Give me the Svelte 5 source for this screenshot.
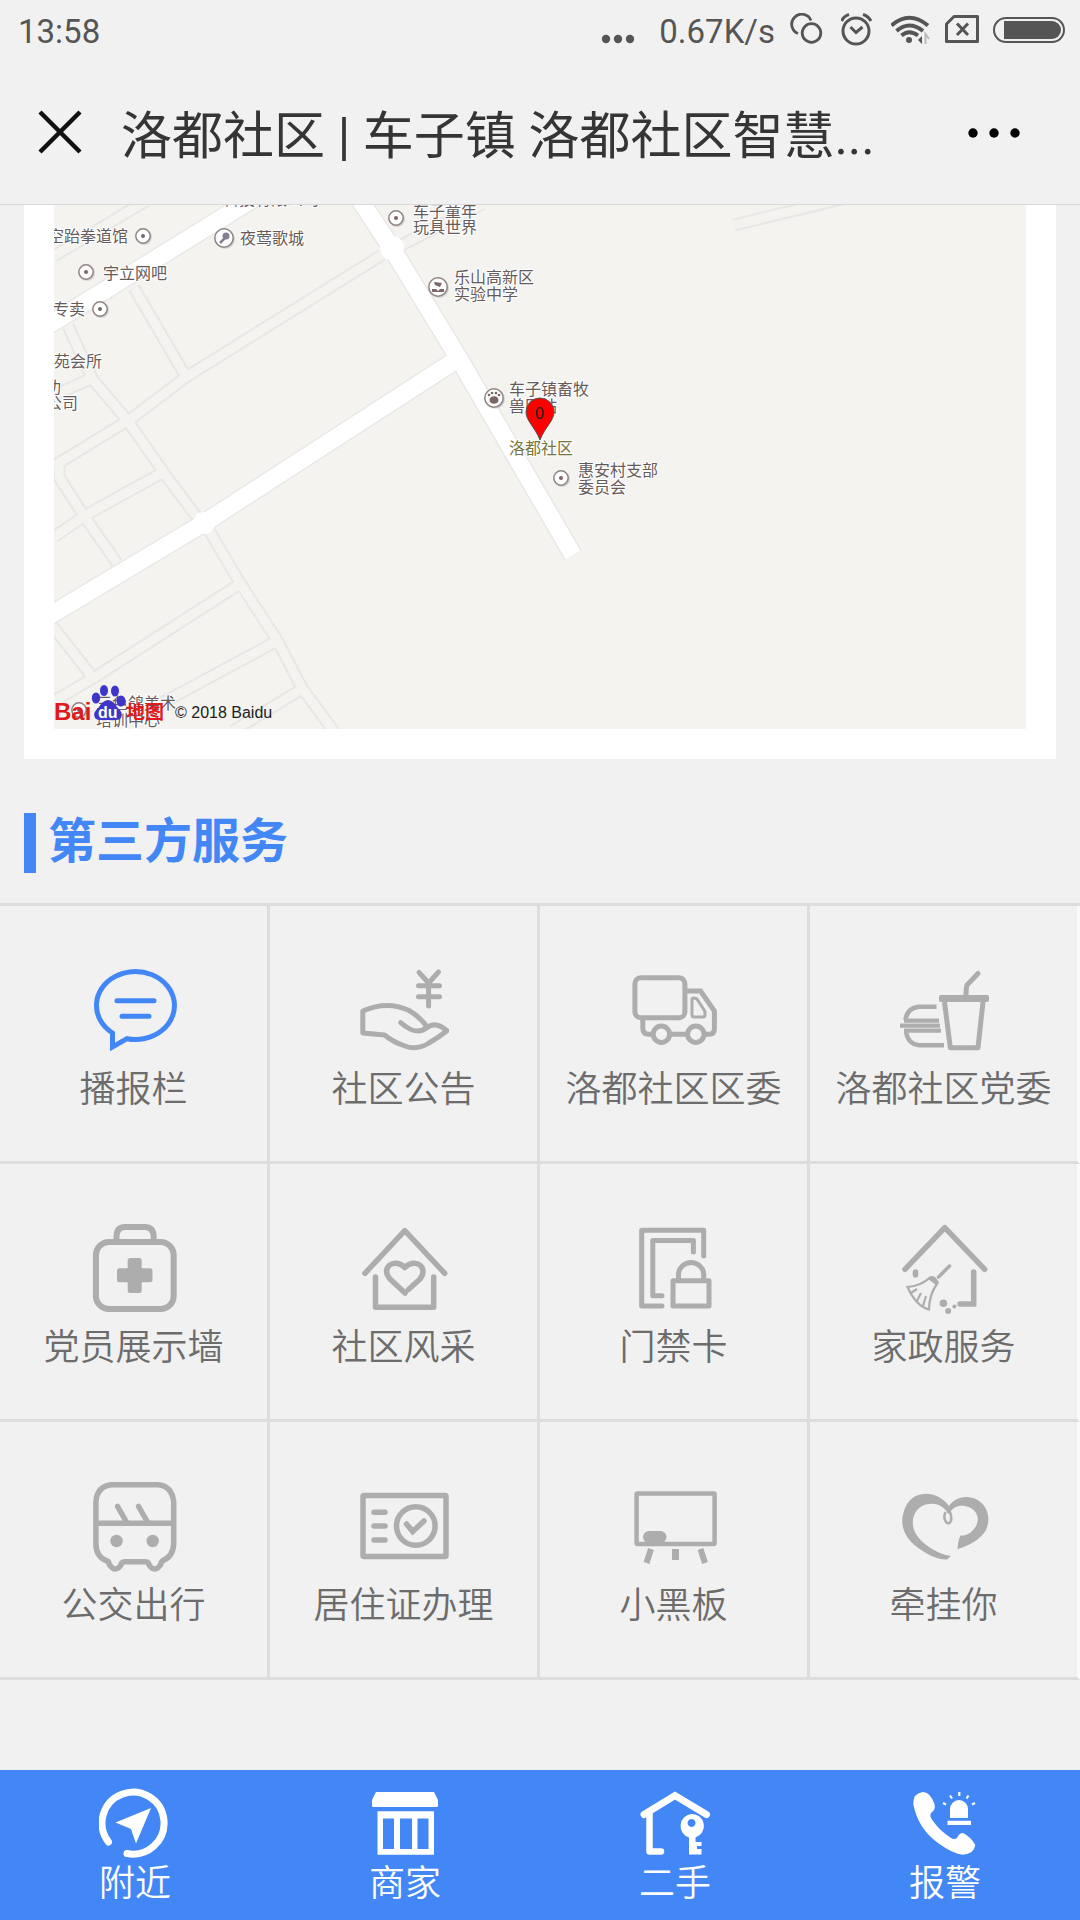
<script>
  let active = 0;

  let services = [
    {
      title: "播报栏",
      icon: `<path d="M23.5 67V81L38 72.7A39 34 0 1 0 23.5 67Z" /><path d="M28 34.7H65M33 50.3H60" stroke-linecap="round" />`,
    },
    {
      title: "社区公告",
      icon: `<g stroke-linecap="round" stroke-linejoin="round"><path d="M60 6.3L69.6 17L79.5 6M69.6 17V40M59.5 19.7H80.5M59.5 30.7H80.5" /><path d="M3.8 45C20 38 36 38 50 44.5C59 49.5 63 54 68.5 61.3C74 57 80 58 88 64.7C80 71 76 73.5 70 77C62 82 54 83 46 80C37 77 31 73.5 25.5 69L3.8 67Z" /><path d="M41.7 56.7C50 64 59 69 68.5 61" /></g>`,
    },
    {
      title: "洛都社区区委",
      icon: `<rect x="5.9" y="11.7" width="50" height="40" rx="6" /><path d="M57 25H71.6L85.4 45V63Q85.4 68.3 80 68.3H76M13.8 53V62Q13.8 68.3 20 68.3H23M42 68.3H57" /><circle cx="32.4" cy="68.3" r="8.2" /><circle cx="66.8" cy="68.3" r="8.2" /><path d="M63 33Q63 32 65 32Q67.5 32 69 34.5L76 45.5V49Q76 51 74 51H65Q63 51 63 49Z" stroke-width="3" />`,
    },
    {
      title: "洛都社区党委",
      icon: `<path d="M79 7.5L68 19Q67 22 67 30" stroke-linecap="round" /><rect x="40" y="29" width="50" height="7" rx="2" fill="#adadad" stroke="none" /><path d="M45.5 36L51.3 81.7H79L84 36" stroke-linejoin="round" /><path d="M37.5 40.7H20Q8 42 6.5 54M7 66Q9 78 20 79.3H45" stroke-width="4.5" /><path d="M5 54.7H40M1 59.7H41M5 64.7H42" stroke-width="4.3" />`,
    },
    {
      title: "党员展示墙",
      icon: `<g stroke-width="6"><path d="M27.5 17V12Q28 3 36 3H56Q64 3 64.7 12V17" /><rect x="6.9" y="18" width="77.8" height="67" rx="13" /></g><g fill="#adadad" stroke="none"><rect x="28" y="44.3" width="35.5" height="14" rx="2.5" /><rect x="38.7" y="34" width="14" height="35" rx="2.5" /></g>`,
    },
    {
      title: "社区风采",
      icon: `<g stroke-width="5.5" stroke-linecap="round" stroke-linejoin="round"><path d="M5.9 49.3L45.8 6.7L85.7 49.3" /><path d="M16.5 53V83.3H74.7V53" /><path d="M46 69L31 55C21 44 35 33 45.8 43.5C57 33 70 44 61 55L49.5 65.5" /></g>`,
    },
    {
      title: "门禁卡",
      icon: `<g stroke-linecap="round" stroke-linejoin="round"><path d="M74.7 32V6.3H12.7V82H33" /><path d="M64.4 28V16.5H23.8V71.7H33" /><rect x="44" y="56.7" width="36" height="25.3" /><path d="M49.5 55V49.5A12.7 12.7 0 0 1 74.7 49.5V55" /></g>`,
    },
    {
      title: "家政服务",
      icon: `<g stroke-width="5.5"><path d="M5.9 45.3L45.8 3.7L85.7 45.3" stroke-linecap="round" stroke-linejoin="round" /><path d="M74.7 48V80H61M16.5 48V51" stroke-linecap="round" /></g><path d="M50.5 42L39.5 53" stroke-width="3.5" stroke-linecap="round" /><path d="M31 53.5Q36 52 38.5 59Q30 71 30 85.5Q17 82 8.5 63Q22 62 31 53.5ZM12 69L18 65M18 77L22 69M24 82L27 72" stroke-width="2.2" /><path d="M31 53.5L38.5 59.5" stroke-width="4.5" /><g fill="#adadad" stroke="none"><circle cx="44.4" cy="79.3" r="3.8" /><circle cx="49.2" cy="87" r="3" /><circle cx="55.4" cy="82.5" r="2" /></g>`,
    },
    {
      title: "公交出行",
      icon: `<g stroke-width="5.5"><path d="M18 79Q7 75 6.9 62V20Q8 4 23 2.8H69Q83 4 84.7 20V62Q84 75 73 79M6.9 41.3H84.7" /><path d="M28.6 24.5L37.5 40M49.6 24.5L58.5 40" stroke-linecap="round" /><path d="M17 78.5Q20 79 20 82Q26 91.5 32 83Q32 80 36 79.7H56Q60 80 60 83Q66 91.5 72 82Q72 79 75 78.5" /></g><g fill="#adadad" stroke="none"><circle cx="27.5" cy="59" r="6.2" /><circle cx="63.7" cy="59" r="6.2" /></g>`,
    },
    {
      title: "居住证办理",
      icon: `<g stroke-width="5.5"><rect x="4" y="13.5" width="83" height="61" rx="1" /><circle cx="56.8" cy="44" r="19.3" /><path d="M15 30.3H26M15 44H26M15 58H26M47.5 42L53.7 49.5L65 39" stroke-linecap="round" /></g>`,
    },
    {
      title: "小黑板",
      icon: `<rect x="7.6" y="11.5" width="78" height="50.5" rx="1" stroke-width="4.5" /><rect x="14" y="49" width="23.5" height="12" rx="6" fill="#adadad" stroke="none" /><path d="M22 67L17.5 81M71.5 67L76 81" stroke-width="6" /><path d="M46.5 67V78" stroke-width="7" />`,
    },
    {
      title: "牵挂你",
      icon: `<path d="M50 24C38 8 17 8 8 22C-2 41 5 55 18 65C30 74 40 78 48 77.5L52 74C38 72 23 62 17 52C9 38 17 23 30 22C40 21 46 26 49 32L51.5 30C54 25 60 23 66 24C76 26 82 34 77 44C73 51 67 54 61.5 53.5Q59 58 58.5 67C70 64 82 57 87 48C93 34 87 20 74 16C63 13 55 17 50 24Z" fill="#adadad" stroke="none" /><path d="M46.5 30Q44 36 47 40Q50 43 52 39Q53 34 50 28" stroke-width="2.5" />`,
    },
  ];

  let tabs = [
    {
      title: "附近",
      icon: `<path d="M9.5 54A31 31 0 1 1 28 65.5" fill="none" stroke="#fff" stroke-width="7" stroke-linecap="round" /><path d="M52 20L16.5 34.5L32 41L37 55.5Z" />`,
    },
    {
      title: "商家",
      icon: `<path d="M7 4H65L69 12V18Q69 19 67 19H5Q3 19 3 18V12Z" /><path fill-rule="evenodd" d="M8.5 23.3H65V66.7H8.5ZM14 30.5V61H25V30.5ZM31 30.5V61H43V30.5ZM48.5 30.5V61H59.5V30.5Z" />`,
    },
    {
      title: "二手",
      icon: `<path d="M5 26.5L36 7.5L67.5 26.5" fill="none" stroke="#fff" stroke-width="7" stroke-linecap="round" /><path d="M10.5 26V63.5H22" fill="none" stroke="#fff" stroke-width="6.5" stroke-linecap="round" stroke-linejoin="round" /><path fill-rule="evenodd" d="M52.5 26A11.7 12 0 0 1 56.5 49.5V54H62.5V58H58V61H62.5V66.5H50V49.5A11.7 12 0 0 1 52.5 26ZM52.5 31A4 4 0 1 0 52.6 31Z" />`,
    },
    {
      title: "报警",
      icon: `<path d="M14 4Q4 5 4.3 16C7 31 15 45 29 55Q44 66 54 66.7Q65 66 66.3 57Q62 49 54 45Q50 45 48 50Q45 52 42 50Q31 43 24 33Q20 28 22 25Q27 22 25.5 16Q21 4 14 4Z" /><path d="M41 30V21A9 9 0 0 1 59 21V30ZM38.5 32.7H62V37H38.5Z" /><path d="M50.3 4V8M41 7.5L43 10.5M59.5 7.5L57.5 10.5M34 15L37 16.5M66 15L63 16.5" stroke="#fff" stroke-width="2.2" />`,
    },
  ];

  // small streets, drawn as a casing with a fill on top
  let streets = [
    "M328 50L132 172L78 213L0 261",
    "M342 43L428 -1",
    "M80 83L131 170",
    "M14 121L39 175L73 215L115 275L143 312",
    "M0 190L39 173",
    "M0 51L92 -4",
    "M5 258V272L28 308L63 358",
    "M0 332L32 310L108 268",
    "M153 322L186 378L223 435L248 483L290 540",
    "M186 379L41 472L0 496",
    "M223 436L106 499",
    "M248 484L179 526",
    "M-4 418L40 474",
    "M680 20L800 -9",
  ];
  let roads = ["M-20 129L210 -13", "M298 -17L337 42L404 152L519 350", "M399 157L150 318L-20 420"];

  let dots = [
    [89, 31],
    [32, 67],
    [46, 104],
    [342, 13],
    [507, 273],
    [25, 505],
  ];
  let places = [
    [-6, 37, "空跆拳道馆"],
    [186, 39, "夜莺歌城"],
    [49, 74, "宇立网吧"],
    [-1, 110, "专卖"],
    [0, 162, "苑会所"],
    [-9, 188, "功"],
    [-8, 204, "公司"],
    [169, 0, "科技有限公司"],
    [359, 12, "车子童年"],
    [359, 28, "玩具世界"],
    [400, 78, "乐山高新区"],
    [400, 95, "实验中学"],
    [455, 190, "车子镇畜牧"],
    [455, 207, "兽医站"],
    [524, 271, "惠安村支部"],
    [524, 288, "委员会"],
    [42, 504, "三色鸽美术"],
    [42, 521, "培训中心"],
  ];
</script>

<div class="page">
  <div class="status">
    <span>13:58</span>
    <div class="status-right">
      <svg width="44" height="34" viewBox="0 0 44 34" fill="#555">
        <circle cx="5" cy="26" r="4.2" /><circle cx="17" cy="26" r="4.2" /><circle cx="29" cy="26" r="4.2" />
      </svg>
      <span>0.67K/s</span>
      <svg width="38" height="34" viewBox="0 0 38 34" fill="none" stroke="#555" stroke-width="2.8">
        <circle cx="22.5" cy="20" r="9.3" />
        <path d="M9 20.500A10 10 0 1 1 22 7.5" />
      </svg>
      <svg width="36" height="34" viewBox="0 0 36 34" fill="none" stroke="#555" stroke-width="3">
        <circle cx="15" cy="18" r="13" />
        <path d="M9.5 14L15 19.5L21.5 14" />
        <path d="M0.5 8Q3 3 8 1.5M30 8Q27 3 22 1.5" />
      </svg>
      <svg width="40" height="34" viewBox="0 0 40 34" fill="none" stroke="#555" stroke-width="4">
        <path d="M0.5 12.5Q18 -3 37 12.5M5.5 18Q18 7 32 18M10.5 22.5Q18 16 27 22.5" />
        <circle cx="18" cy="27" r="3" fill="#555" stroke="none" />
        <path d="M27 27L31 23V31Z" fill="#555" stroke="none" />
        <path d="M34.5 31V21L38 26" stroke="#bbb" stroke-width="2" />
      </svg>
      <svg width="34" height="34" viewBox="0 0 34 34" fill="none" stroke="#555" stroke-width="3">
        <path d="M9 3.5H32.5V28.5H1.5V11Z" stroke-linejoin="round" />
        <path d="M12 10.5L23 22M23 10.5L12 22" />
      </svg>
      <svg width="72" height="34" viewBox="0 0 72 34">
        <rect x="1" y="5" width="70" height="24" rx="12" fill="none" stroke="#555" stroke-width="2" />
        <path d="M11 8H59A9 9 0 0 1 59 26H11Z" fill="#555" />
      </svg>
    </div>
  </div>

  <header class="titlebar">
    <button class="close" aria-label="关闭">
      <svg width="44" height="44" viewBox="0 0 44 44" stroke="#111" stroke-width="4.5">
        <path d="M2 2L42 42M42 2L2 42" />
      </svg>
    </button>
    <h1>洛都社区 | 车子镇 洛都社区智慧...</h1>
    <button class="more" aria-label="更多">
      <svg width="54" height="12" viewBox="0 0 54 12">
        <circle cx="6" cy="7" r="4.7" /><circle cx="27" cy="7" r="4.7" /><circle cx="48" cy="7" r="4.7" />
      </svg>
    </button>
  </header>

  <div class="map-card">
    <svg class="map" viewBox="0 0 972 524">
      <rect width="972" height="524" fill="#f4f3ef" />
      {#each streets as d}
        <path class="street-edge" {d} />
      {/each}
      {#each streets as d}
        <path class="street" {d} />
      {/each}
      {#each roads as d}
        <path class="road-edge" {d} />
      {/each}
      {#each roads as d}
        <path class="road" {d} />
      {/each}
      <circle cx="338" cy="43" r="12" fill="#fff" />
      <circle cx="150" cy="318" r="11" fill="#fff" />

      {#each dots as [x, y]}
        <circle cx={x + 1} cy={y + 1} r="8" fill="#0002" />
        <circle cx={x} cy={y} r="7.2" fill="#fff" stroke="#8f8383" stroke-width="1.5" />
        <circle cx={x} cy={y} r="2" fill="#7b6565" />
      {/each}
      {#each [[170, 33], [384, 82], [440, 193]] as [x, y]}
        <circle cx={x + 1} cy={y + 1} r="10" fill="#0002" />
        <circle cx={x} cy={y} r="9.2" fill="#fff" stroke="#8f8383" stroke-width="1.5" />
      {/each}
      <circle cx="172" cy="31" r="3.5" fill="#857f90" />
      <path d="M171 33L166 38" stroke="#857f90" stroke-width="2.5" />
      <path d="M380 77L388 78L386 82L381 80ZM378 84H382L384 86L386 84H390V87H378Z" fill="#7b6565" />
      <g fill="#7b6565">
        <ellipse cx="440" cy="195" rx="4.5" ry="3.8" />
        <circle cx="435" cy="190" r="1.3" /><circle cx="438" cy="188" r="1.3" />
        <circle cx="442" cy="188" r="1.3" /><circle cx="445" cy="190" r="1.3" />
      </g>

      {#each places as [x, y, name]}
        <text class="place" {x} {y}>{name}</text>
      {/each}
      <text class="place here" x="455" y="249">洛都社区</text>

      <path d="M486 235C481 222 472 216 472 207A14 14 0 0 1 500 207C500 216 491 222 486 235Z" fill="#f00" stroke="#555" />
      <text class="latin" x="481" y="214">0</text>

      <text class="logo" x="0" y="515">Bai</text>
      <g fill="#3f35c9">
        <path d="M54 495Q60 496 63 502Q70 508 67 513Q65 516 54 515Q43 516 41 513Q38 508 45 502Q48 496 54 495Z" />
        <ellipse cx="42" cy="493" rx="4.2" ry="5.5" /><ellipse cx="50" cy="485.5" rx="4" ry="5.5" />
        <ellipse cx="61" cy="486" rx="4" ry="5.5" /><ellipse cx="67" cy="496" rx="4.5" ry="5.5" />
      </g>
      <text class="logo du" x="44" y="513">du</text>
      <text class="logo zh" x="72" y="514">地图</text>
      <text class="latin" x="121" y="513">© 2018 Baidu</text>
    </svg>
  </div>

  <section class="services">
    <h2><span>第三方服务</span></h2>
    <div class="grid">
      {#each services as item, i}
        <a href="#service" class={`cell ${i === active ? "active" : ""}`} on:click|preventDefault={() => (active = i)}>
          <svg width="90" height="90" viewBox="0 0 90 90" fill="none" stroke={i === active ? "#4287f5" : "#adadad"} stroke-width="5">
            {@html item.icon}
          </svg>
          <span>{item.title}</span>
        </a>
      {/each}
    </div>
  </section>

  <nav class="tabs">
    {#each tabs as tab}
      <a href="#tab">
        <svg width="72" height="72" viewBox="0 0 72 72" fill="#fff">{@html tab.icon}</svg>
        <span>{tab.title}</span>
      </a>
    {/each}
  </nav>
</div>

<style>
  :global(body) {
    background: #f0f0f0;
  }
  .page {
    display: flex;
    flex-direction: column;
    min-height: 100vh;
    font-family: Roboto, "Noto Sans CJK SC", sans-serif;
  }
  svg {
    display: block;
    flex-shrink: 0;
  }
  a {
    color: inherit;
    text-decoration: none;
  }
  button {
    border: 0;
    padding: 0;
    background: none;
    cursor: pointer;
  }

  .status {
    display: flex;
    justify-content: space-between;
    align-items: center;
    height: 60px;
    padding: 0 15px 0 18px;
    background: #f1f1f1;
    color: #555;
    font-size: 33px;
  }
  .status span {
    padding-top: 2px;
  }
  .status-right {
    display: flex;
    align-items: center;
    gap: 14px;
  }

  .titlebar {
    display: flex;
    align-items: center;
    height: 144px;
    padding: 0 59px 0 38px;
    background: #f1f1f1;
    border-bottom: 1px solid #d8d8d8;
  }
  .titlebar h1 {
    flex: 1;
    margin: 0 0 0 39px;
    color: #353535;
    font-size: 51px;
    font-weight: 400;
    white-space: nowrap;
  }

  .map-card {
    margin: 0 24px;
    padding: 0 30px 30px;
    background: #fff;
  }
  .map {
    width: 100%;
  }
  .map path {
    stroke-linejoin: round;
  }
  .map .street-edge,
  .map .street,
  .map .road-edge,
  .map .road {
    fill: none;
  }
  .street-edge {
    stroke: #e8e7e5;
    stroke-width: 13px;
  }
  .street {
    stroke: #f4f3ef;
    stroke-width: 9px;
  }
  .road-edge {
    stroke: #e9e8e6;
    stroke-width: 20px;
  }
  .road {
    stroke: #fff;
    stroke-width: 17px;
  }
  .place {
    font-family: "Noto Sans CJK SC", sans-serif;
    font-size: 16px;
    fill: #665a5a;
    stroke: #fff;
    stroke-width: 2px;
    paint-order: stroke;
  }
  .here {
    fill: #77753c;
  }
  .latin {
    font-family: "Liberation Sans", sans-serif;
    font-size: 16px;
    fill: #222;
  }
  .logo {
    font-family: "Liberation Sans", sans-serif;
    font-size: 24px;
    font-weight: 700;
    fill: #e1191b;
  }
  .du {
    font-size: 16px;
    fill: #fff;
  }
  .zh {
    font-family: "Noto Sans CJK SC", sans-serif;
    font-size: 19px;
  }

  .services {
    margin-top: 24px;
    background: #f1f1f1;
  }
  h2 {
    height: 60px;
    margin: 0 24px;
    padding: 30px 0;
    color: #4287f5;
    font-size: 48px;
    font-weight: 700;
    line-height: 58px;
  }
  h2 span {
    display: block;
    height: 60px;
    padding-left: 12px;
    border-left: 12px solid #4287f5;
  }
  .grid {
    display: grid;
    grid-template-columns: repeat(4, 1fr);
    border-top: 3px solid #ddd;
  }
  .cell {
    display: flex;
    flex-direction: column;
    align-items: center;
    padding: 60px 0 37px;
    border-right: 3px solid #ddd;
    border-bottom: 3px solid #ddd;
    color: #6c6c6c;
    font-size: 36px;
    font-weight: 350;
    line-height: 68px;
    white-space: nowrap;
  }
  .cell:nth-child(4n) {
    border-right-color: #fafafa;
  }

  .tabs {
    display: grid;
    grid-template-columns: repeat(4, 1fr);
    margin-top: auto;
    padding: 18px 0 12px;
    background: #4287f5;
    color: #fff;
    font-size: 36px;
    font-weight: 350;
    line-height: 48px;
  }
  .tabs a {
    display: flex;
    flex-direction: column;
    align-items: center;
  }
</style>
